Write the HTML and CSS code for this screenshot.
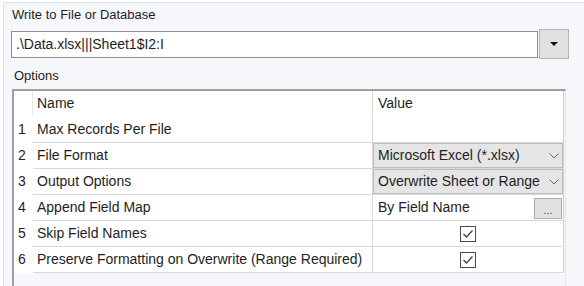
FILE: index.html
```html
<!DOCTYPE html>
<html lang="en">
<head>
  <meta charset="UTF-8">
  <title>Write to File or Database</title>
  <link rel="stylesheet" href="styles.css">
</head>
<body>
  <div class="panel">
    <div class="label">Write to File or Database</div>

    <div class="path-row">
      <div class="path-input">.\Data.xlsx|||Sheet1$I2:I</div>
      <div class="drop-btn"><span class="tri"></span></div>
    </div>

    <div class="label options-label">Options</div>

    <div class="grid">
      <div class="row head">
        <div class="num"></div>
        <div class="name">Name</div>
        <div class="val">Value</div>
      </div>
      <div class="row">
        <div class="num">1</div>
        <div class="name">Max Records Per File</div>
        <div class="val"></div>
      </div>
      <div class="row">
        <div class="num">2</div>
        <div class="name">File Format</div>
        <div class="val combo">
          <span>Microsoft Excel (*.xlsx)</span>
          <svg class="chev" width="10" height="6" viewBox="0 0 10 6"><polyline points="0.5,0.5 5,5 9.5,0.5" fill="none" stroke="#6a6a6a" stroke-width="1"/></svg>
        </div>
      </div>
      <div class="row">
        <div class="num">3</div>
        <div class="name">Output Options</div>
        <div class="val combo">
          <span>Overwrite Sheet or Range</span>
          <svg class="chev" width="10" height="6" viewBox="0 0 10 6"><polyline points="0.5,0.5 5,5 9.5,0.5" fill="none" stroke="#6a6a6a" stroke-width="1"/></svg>
        </div>
      </div>
      <div class="row">
        <div class="num">4</div>
        <div class="name">Append Field Map</div>
        <div class="val with-btn">
          <span>By Field Name</span>
          <div class="dots-btn">...</div>
        </div>
      </div>
      <div class="row">
        <div class="num">5</div>
        <div class="name">Skip Field Names</div>
        <div class="val center">
          <svg class="check" width="16" height="16" viewBox="0 0 16 16"><rect x="0.5" y="0.5" width="15" height="15" fill="#fff" stroke="#4a4a4a"/><polyline points="3.5,8 6.5,11 12.5,4.5" fill="none" stroke="#444" stroke-width="1.3"/></svg>
        </div>
      </div>
      <div class="row">
        <div class="num">6</div>
        <div class="name">Preserve Formatting on Overwrite (Range Required)</div>
        <div class="val center">
          <svg class="check" width="16" height="16" viewBox="0 0 16 16"><rect x="0.5" y="0.5" width="15" height="15" fill="#fff" stroke="#4a4a4a"/><polyline points="3.5,8 6.5,11 12.5,4.5" fill="none" stroke="#444" stroke-width="1.3"/></svg>
        </div>
      </div>
    </div>
  </div>
</body>
</html>
```
FILE: styles.css
```css
html,
body {
  margin: 0;
  padding: 0;
  height: 100%;
  overflow: hidden;
  background: #fff;
  font-family: "Liberation Sans", Arial, sans-serif;
  color: #1e1e1e;
}

.panel {
  box-sizing: border-box;
  margin: 2px 0 0 3px;
  padding-top: 4px;
  height: calc(100% - 2px);
  overflow: hidden;
  background: #f6f7fb;
  border-top: 1px solid #dbe1ea;
  border-left: 1px solid #dbe1ea;
}

.label {
  font-size: 13px;
  line-height: 16px;
  padding-left: 8px;
}

.options-label {
  margin-top: 9px;
  padding-left: 10px;
}

.path-row {
  display: flex;
  align-items: center;
  gap: 1px;
  margin-top: 6px;
  padding: 0 15px 0 7px;
}

.path-input {
  flex: 1;
  height: 25px;
  line-height: 25px;
  padding-left: 4px;
  font-size: 14px;
  background: #fff;
  border: 1px solid #8d8d8d;
}

.drop-btn {
  width: 28px;
  height: 28px;
  display: flex;
  align-items: center;
  justify-content: center;
  background: #e1e1e1;
  border: 1px solid #b4b4b4;
}

.tri {
  width: 0;
  height: 0;
  border-left: 4px solid transparent;
  border-right: 4px solid transparent;
  border-top: 4px solid #111;
}

.grid {
  margin: 5px 0 0 8px;
  width: 550px;
  height: 196px;
  padding-right: 1px;
  border-top: 2px solid #a0a0a0;
  border-left: 2px solid #a0a0a0;
  border-right: 1px solid #e3e6ec;
}

.row {
  display: flex;
  height: 26px;
  font-size: 14px;
  background: #fff;
}

.row > div {
  box-sizing: border-box;
  height: 26px;
  line-height: 25px;
  border-bottom: 1px solid #d9d9d9;
  white-space: nowrap;
}

.num {
  width: 19px;
  padding-left: 4px;
  border-bottom-color: transparent !important;
}

.name {
  width: 339px;
  padding-left: 4px;
}

.val {
  width: 192px;
  padding-left: 5px;
  border-left: 1px solid #d9d9d9;
  border-right: 1px solid #cfcfcf;
}

.head .num {
  border-right: 1px solid #e6e6e6;
  height: 25px !important;
}

.head .name,
.head .val {
  border-bottom-color: transparent;
}

.combo {
  display: flex;
  align-items: center;
  justify-content: space-between;
  padding-right: 4px;
  background: #e5e5e5;
  box-shadow: inset 0 0 0 1px #bdbdbd;
}

.with-btn {
  display: flex;
  align-items: center;
  justify-content: space-between;
  padding-right: 1px;
}

.dots-btn {
  width: 26px;
  height: 19px;
  margin-top: 1px;
  background: #e1e1e1;
  border: 1px solid #adadad;
  font-size: 11px;
  line-height: 22px;
  text-align: center;
  color: #444;
}

.center {
  display: flex;
  align-items: center;
  justify-content: center;
  padding-left: 0;
}
```
